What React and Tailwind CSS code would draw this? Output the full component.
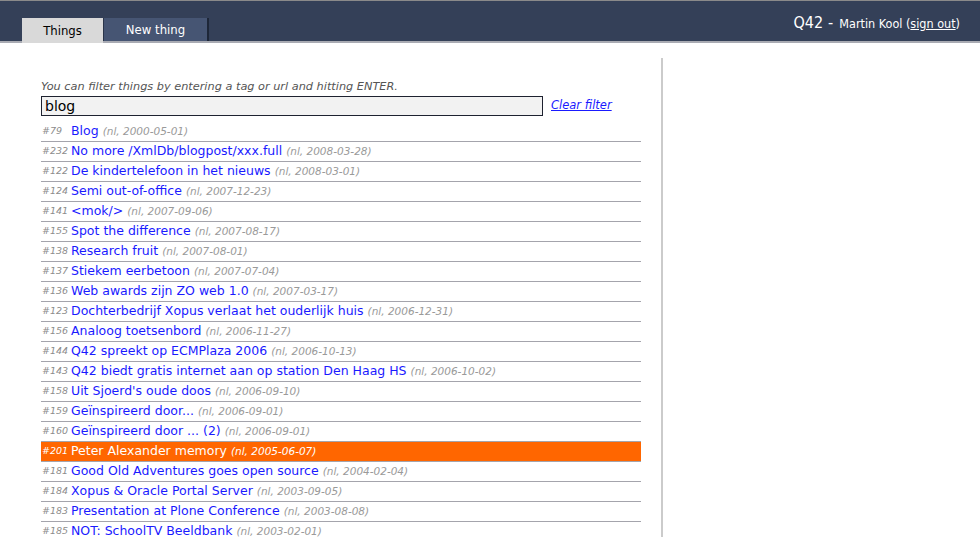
import React from "react";

const rows = [
  ["#79", "Blog", "2000-05-01"],
  ["#232", "No more /XmlDb/blogpost/xxx.full", "2008-03-28"],
  ["#122", "De kindertelefoon in het nieuws", "2008-03-01"],
  ["#124", "Semi out-of-office", "2007-12-23"],
  ["#141", "<mok/>", "2007-09-06"],
  ["#155", "Spot the difference", "2007-08-17"],
  ["#138", "Research fruit", "2007-08-01"],
  ["#137", "Stiekem eerbetoon", "2007-07-04"],
  ["#136", "Web awards zijn ZO web 1.0", "2007-03-17"],
  ["#123", "Dochterbedrijf Xopus verlaat het ouderlijk huis", "2006-12-31"],
  ["#156", "Analoog toetsenbord", "2006-11-27"],
  ["#144", "Q42 spreekt op ECMPlaza 2006", "2006-10-13"],
  ["#143", "Q42 biedt gratis internet aan op station Den Haag HS", "2006-10-02"],
  ["#158", "Uit Sjoerd's oude doos", "2006-09-10"],
  ["#159", "Geïnspireerd door...", "2006-09-01"],
  ["#160", "Geïnspireerd door ... (2)", "2006-09-01"],
  ["#201", "Peter Alexander memory", "2005-06-07", true],
  ["#181", "Good Old Adventures goes open source", "2004-02-04"],
  ["#184", "Xopus & Oracle Portal Server", "2003-09-05"],
  ["#183", "Presentation at Plone Conference", "2003-08-08"],
  ["#185", "NOT: SchoolTV Beeldbank", "2003-02-01"],
];

export default function App() {
  return (
    <div
      className="w-[980px] h-[537px] overflow-hidden bg-white"
      style={{ fontFamily: '"DejaVu Sans Condensed", "DejaVu Sans", sans-serif' }}
    >
      {/* Header */}
      <div className="h-[43px] bg-[#344058] border-t border-[#8a8a8a] border-b-2 border-b-[#a9abb3] flex items-end justify-between relative">
        <div className="flex items-end pl-[22px] h-full">
          <div className="w-[81px] bg-[#d9d9d9] text-black text-[13px] flex items-center justify-center relative top-[2px] h-[25px]">
            Things
          </div>
          <div className="w-[106px] h-[23px] bg-[#465573] text-white text-[13px] flex items-center justify-center border-l border-[#2a3449] border-r-2 border-r-[#1e2738]">
            New thing
          </div>
        </div>
        <div className="self-start pt-[10px] pr-[20px] text-white flex items-baseline">
          <span className="text-[16px]">Q42</span>
          <span className="text-[16px] ml-[5px] mr-[6px]">-</span>
          <span className="text-[12.5px]">
            Martin Kool (<span className="underline">sign out</span>)
          </span>
        </div>
      </div>

      {/* Content */}
      <div className="flex pt-[15px] pl-[41px]" style={{ fontFamily: '"DejaVu Sans", sans-serif' }}>
        <div className="w-[600px]">
          <div className="pt-[22px] text-[11.3px] italic text-[#555] leading-[14px]">
            You can filter things by entering a tag or url and hitting ENTER.
          </div>
          <div className="flex items-center mt-[2px]">
            <div className="w-[502px] h-[20px] bg-[#f2f2f2] border border-[#1e2230] flex items-center pl-[3px] text-[14px] text-black">
              blog
            </div>
            <span className="ml-[8px] text-[11.5px] italic underline text-[#1a1aff]">Clear filter</span>
          </div>
          <div className="mt-[6px]">
            {rows.map(([id, title, date, hl], i) => (
              <div
                key={i}
                className={
                  "h-[20px] flex items-center whitespace-nowrap border-b border-[#a4a4ac] " +
                  (hl ? "bg-[#ff6600] text-white" : "")
                }
              >
                <span
                  className={
                    "w-[30px] shrink-0 pl-[1px] text-[9.5px] italic " + (hl ? "text-white" : "text-[#8c8c8c]")
                  }
                >
                  {id}
                </span>
                <span className={"text-[12.5px] " + (hl ? "text-white" : "text-[#1a1aff]")}>{title}</span>
                <span
                  className={
                    "ml-[4px] text-[10.5px] italic " + (hl ? "text-white" : "text-[#9a9a9a]")
                  }
                >
                  (nl, {date})
                </span>
              </div>
            ))}
          </div>
        </div>
        <div className="ml-[20px] w-[2px] h-[480px] bg-[#cbcbcb]" />
      </div>
    </div>
  );
}
